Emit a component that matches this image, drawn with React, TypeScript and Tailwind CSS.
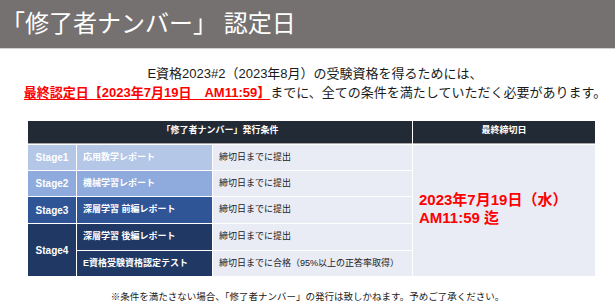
import React from "react";

const jp = "font-['Liberation_Sans','Noto_Sans_CJK_JP',sans-serif]";

const stageRows = [
  { stage: "Stage1", title: "応用数学レポート", cond: "締切日までに提出", bg: "bg-[#b4c7e7]", row: "row-start-2", h: "h-[25px]" },
  { stage: "Stage2", title: "機械学習レポート", cond: "締切日までに提出", bg: "bg-[#8faadc]", row: "row-start-3", h: "h-[25px]" },
  { stage: "Stage3", title: "深層学習 前編レポート", cond: "締切日までに提出", bg: "bg-[#2f5597]", row: "row-start-4", h: "h-[26px]" },
];

export default function App() {
  return (
    <div className={`w-[615px] h-[308px] bg-white overflow-hidden ${jp}`}>
      {/* Title bar */}
      <div className="h-[49px] bg-[#767171] border-b border-[#d0cece] flex items-center pl-[1px]">
        <h1 className="text-white text-[24px] leading-none">「修了者ナンバー」 認定日</h1>
      </div>

      {/* Lead text */}
      <div className="mt-[15px] pl-[15px] text-center text-[13px] leading-[19px] text-[#1a1a1a]">
        <p>E資格2023#2（2023年8月）の受験資格を得るためには、</p>
        <p>
          <span className="text-[#ff0000] font-bold underline underline-offset-2">最終認定日【2023年7月19日　AM11:59】</span>
          までに、全ての条件を満たしていただく必要があります。
        </p>
      </div>

      {/* Conditions table */}
      <div className="mt-[19px] ml-[28px] w-[567px] grid grid-cols-[48px_135px_199px_182px] gap-x-[1px] gap-y-[1px] bg-white text-[9px]">
        <div className="col-span-3 row-start-1 h-[23px] bg-[#222a35] border-b-[1px] border-[#a6a6a6] flex items-center justify-center text-white font-bold">
          <span className="-mt-[3px]">「修了者ナンバー」発行条件</span>
        </div>
        <div className="col-start-4 row-start-1 h-[23px] bg-[#222a35] border-b-[1px] border-[#a6a6a6] flex items-center justify-center text-white font-bold">
          <span className="-mt-[3px]">最終締切日</span>
        </div>

        {stageRows.map((r) => (
          <React.Fragment key={r.stage}>
            <div className={`col-start-1 ${r.row} ${r.h} ${r.bg} flex items-center justify-center text-white font-bold text-[10px]`}>
              {r.stage}
            </div>
            <div className={`col-start-2 ${r.row} ${r.bg} flex items-center pl-[6px] text-white font-bold`}>{r.title}</div>
            <div className={`col-start-3 ${r.row} bg-[#e9ebf5] flex items-center pl-[6px] text-[#1a1a1a]`}>{r.cond}</div>
          </React.Fragment>
        ))}

        <div className="col-start-1 row-start-5 row-span-2 bg-[#203864] flex items-center justify-center text-white font-bold text-[10px]">
          Stage4
        </div>
        <div className="col-start-2 row-start-5 h-[26px] bg-[#203864] flex items-center pl-[6px] text-white font-bold">深層学習 後編レポート</div>
        <div className="col-start-3 row-start-5 bg-[#e9ebf5] flex items-center pl-[6px] text-[#1a1a1a]">締切日までに提出</div>
        <div className="col-start-2 row-start-6 h-[25px] bg-[#203864] flex items-center pl-[6px] text-white font-bold">E資格受験資格認定テスト</div>
        <div className="col-start-3 row-start-6 bg-[#e9ebf5] flex items-center pl-[6px] text-[#1a1a1a] whitespace-nowrap">締切日までに合格（95%以上の正答率取得）</div>

        <div className="col-start-4 row-start-2 row-span-5 bg-[#e9ebf5] flex flex-col justify-center pl-[6px] pb-[4px] text-[#ff0000] font-bold text-[15px] leading-[18px]">
          <span>2023年7月19日（水）</span>
          <span>AM11:59 迄</span>
        </div>
      </div>

      {/* Note */}
      <p className="mt-[14px] text-center text-[9.5px] leading-[14px] text-[#1a1a1a]">
        ※条件を満たさない場合、「修了者ナンバー」の発行は致しかねます。予めご了承ください。
      </p>
    </div>
  );
}
